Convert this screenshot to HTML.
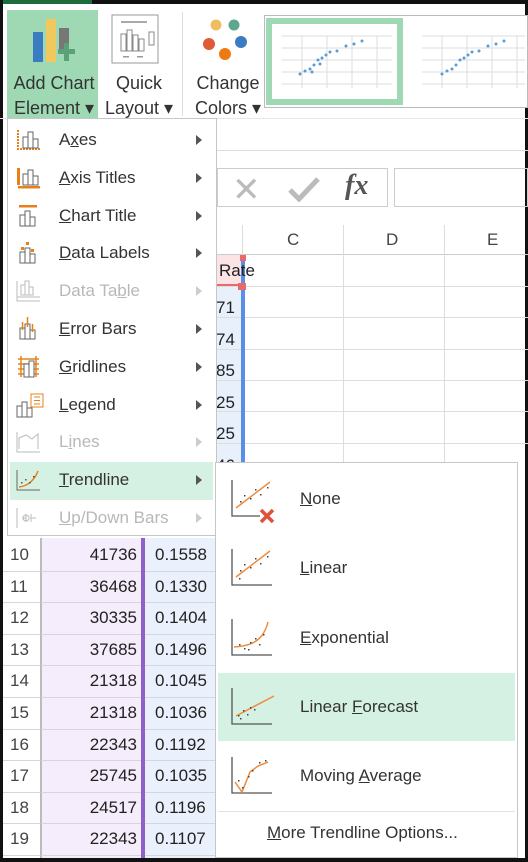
<!DOCTYPE html>
<html><head><meta charset="utf-8"><style>
*{margin:0;padding:0;box-sizing:border-box}
body{width:528px;height:862px;overflow:hidden;background:#fff;font-family:"Liberation Sans",sans-serif;position:relative;color:#222}
.a{position:absolute}
.mi{position:absolute;left:10px;width:203px;height:38px;font-size:17px;color:#333}
.mi .t{position:absolute;left:49px;top:9px}
.mi .ar{position:absolute;left:186px;top:14px;width:0;height:0;border-left:6px solid #555;border-top:5px solid transparent;border-bottom:5px solid transparent}
.dis{color:#b8b8b8}.dis .ar{border-left-color:#ccc}
.mi svg{position:absolute;left:5px;top:7px}
.si{position:absolute;left:218px;width:297px;height:68px;font-size:17px;color:#333}
.si .t{position:absolute;left:82px;top:24px}
.si svg{position:absolute;left:12px;top:14px}
.r{position:absolute;left:3px;width:213px;height:31.6px;border-bottom:1px solid #d6d6d6;font-size:17px;line-height:30px}
.r .n{position:absolute;left:7px;color:#444}
.r .b{position:absolute;left:40px;width:94px;text-align:right}
.r .c{position:absolute;left:152px}
.g{position:absolute;left:216px;width:312px;height:1px;background:#ddd}
u{text-decoration:underline}
</style></head><body>
<div class="a" style="left:0;top:0;width:528px;height:4px;background:#111"></div>
<div class="a" style="left:0;top:0;width:92px;height:4px;background:#1e6b3c"></div>
<div class="a" style="left:0;top:0;width:3px;height:862px;background:#111"></div>
<div class="a" style="left:525px;top:0;width:3px;height:862px;background:#111"></div>
<div class="a" style="left:0;top:858px;width:528px;height:4px;background:#111"></div>

<div class="a" style="left:7px;top:10px;width:91px;height:108px;background:#9fd9b4"></div>
<svg class="a" style="left:30px;top:17px" width="50" height="46" viewBox="0 0 50 46">
<rect x="3" y="15" width="10" height="30" fill="#3a7cc1"/><rect x="16" y="2" width="10" height="43" fill="#f0c85e"/><rect x="29" y="11" width="10" height="24" fill="#777"/>
<rect x="34" y="26" width="5" height="18" fill="#5ca07a"/><rect x="28" y="32" width="17" height="5" fill="#5ca07a"/></svg>
<div class="a" style="left:10px;top:71px;font-size:18px;color:#333;width:88px;text-align:center;line-height:25px">Add Chart<br>Element ▾</div>
<svg class="a" style="left:111px;top:14px" width="48" height="50"><rect x="1" y="1" width="46" height="48" fill="#fff" stroke="#999"/><rect x="10" y="7" width="26" height="2" fill="#aaa"/><rect x="10" y="20" width="5" height="17" fill="none" stroke="#888"/><rect x="16" y="16" width="5" height="21" fill="none" stroke="#888"/><rect x="22" y="21" width="5" height="16" fill="none" stroke="#888"/><rect x="28" y="25" width="5" height="12" fill="none" stroke="#888"/><rect x="38" y="18" width="5" height="13" fill="none" stroke="#888"/><rect x="12" y="42" width="6" height="1.5" fill="#999"/><rect x="26" y="42" width="6" height="1.5" fill="#999"/></svg>
<div class="a" style="left:104px;top:71px;font-size:18px;color:#333;width:70px;text-align:center;line-height:25px">Quick<br>Layout ▾</div>
<div class="a" style="left:182px;top:12px;width:1px;height:104px;background:#ddd"></div>
<svg class="a" style="left:200px;top:17px" width="50" height="46"><circle cx="16" cy="8" r="5.5" fill="#f1bd61"/><circle cx="34" cy="8" r="5.5" fill="#5ea68c"/><circle cx="9" cy="27" r="6" fill="#e05a35"/><circle cx="41" cy="25" r="6" fill="#3a7cc1"/><circle cx="25" cy="37" r="6" fill="#ee7b12"/></svg>
<div class="a" style="left:190px;top:71px;font-size:18px;color:#333;width:76px;text-align:center;line-height:25px">Change<br>Colors ▾</div>
<div class="a" style="left:264px;top:15px;width:264px;height:93px;border:1px solid #bbb;background:#fff"></div>
<div class="a" style="left:266px;top:18px;width:137px;height:87px;background:#9fd9b4"></div>
<svg class="a" style="left:272px;top:24px" width="125" height="75"><rect width="125" height="75" fill="#fff"/><g stroke="#ddd"><line x1="10" y1="12" x2="120" y2="12"/><line x1="10" y1="24" x2="120" y2="24"/><line x1="10" y1="36" x2="120" y2="36"/><line x1="10" y1="48" x2="120" y2="48"/><line x1="10" y1="60" x2="120" y2="60"/><line x1="30" y1="12" x2="30" y2="64"/><line x1="55" y1="12" x2="55" y2="64"/><line x1="80" y1="12" x2="80" y2="64"/><line x1="105" y1="12" x2="105" y2="64"/></g><g fill="#5b9bd5"><circle cx="28" cy="50" r="1.5"/><circle cx="33" cy="47" r="1.5"/><circle cx="38" cy="45" r="1.5"/><circle cx="42" cy="41" r="1.5"/><circle cx="46" cy="36" r="1.5"/><circle cx="50" cy="34" r="1.5"/><circle cx="54" cy="31" r="1.5"/><circle cx="58" cy="28" r="1.5"/><circle cx="65" cy="27" r="1.5"/><circle cx="74" cy="22" r="1.5"/><circle cx="82" cy="20" r="1.5"/><circle cx="90" cy="17" r="1.5"/><circle cx="40" cy="48" r="1.5"/><circle cx="48" cy="40" r="1.5"/></g></svg>
<svg class="a" style="left:412px;top:24px" width="113" height="75"><rect width="113" height="75" fill="#fff"/><g stroke="#ddd"><line x1="10" y1="12" x2="113" y2="12"/><line x1="10" y1="24" x2="113" y2="24"/><line x1="10" y1="36" x2="113" y2="36"/><line x1="10" y1="48" x2="113" y2="48"/><line x1="10" y1="60" x2="113" y2="60"/><line x1="30" y1="12" x2="30" y2="64"/><line x1="55" y1="12" x2="55" y2="64"/><line x1="80" y1="12" x2="80" y2="64"/><line x1="105" y1="12" x2="105" y2="64"/></g><g fill="#5b9bd5"><circle cx="30" cy="50" r="1.5"/><circle cx="35" cy="47" r="1.5"/><circle cx="40" cy="45" r="1.5"/><circle cx="44" cy="41" r="1.5"/><circle cx="48" cy="36" r="1.5"/><circle cx="52" cy="34" r="1.5"/><circle cx="56" cy="31" r="1.5"/><circle cx="60" cy="28" r="1.5"/><circle cx="67" cy="27" r="1.5"/><circle cx="76" cy="22" r="1.5"/><circle cx="84" cy="20" r="1.5"/><circle cx="92" cy="17" r="1.5"/></g></svg>
<div class="a" style="left:0;top:118px;width:528px;height:1px;background:#e6e6e6"></div>

<div class="a" style="left:216px;top:150px;width:312px;height:1px;background:#ddd"></div>
<div class="a" style="left:217px;top:168px;width:171px;height:39px;border:1px solid #ccc"></div>
<div class="a" style="left:394px;top:168px;width:134px;height:39px;border:1px solid #ccc"></div>
<div class="a" style="left:232px;top:170px;font-size:34px;color:#bbb">✕</div>
<svg class="a" style="left:288px;top:176px" width="32" height="26"><path d="M2 14 L11 23 L30 3" stroke="#bbb" stroke-width="5" fill="none"/></svg>
<div class="a" style="left:345px;top:170px;font-size:28px;color:#555;font-family:'Liberation Serif',serif;font-style:italic;font-weight:bold">fx</div>
<div class="a" style="left:216px;top:225px;width:312px;height:30px;border-bottom:1px solid #ccc"></div>
<div class="a" style="left:242px;top:225px;width:1px;height:30px;background:#ddd"></div>
<div class="a" style="left:343px;top:225px;width:1px;height:318px;background:#ddd"></div>
<div class="a" style="left:444px;top:225px;width:1px;height:318px;background:#ddd"></div>
<div class="a" style="left:287px;top:230px;font-size:17px;color:#444">C</div>
<div class="a" style="left:386px;top:230px;font-size:17px;color:#444">D</div>
<div class="a" style="left:487px;top:230px;font-size:17px;color:#444">E</div>
<div class="a" style="left:216px;top:255px;width:26px;height:31px;background:#fde4e4"></div>
<div class="a" style="left:216px;top:286px;width:26px;height:257px;background:#e8f0fc"></div>
<div class="g" style="top:286px"></div><div class="g" style="top:317px"></div><div class="g" style="top:349px"></div><div class="g" style="top:380px"></div><div class="g" style="top:411px"></div><div class="g" style="top:443px"></div>
<div class="a" style="left:241px;top:258px;width:4px;height:285px;background:#5b8ee6"></div>
<div class="a" style="left:240px;top:255px;width:6px;height:6px;background:#e86a6a"></div>
<div class="a" style="left:238px;top:283px;width:8px;height:7px;background:#e86a6a"></div>
<div class="a" style="left:216px;top:284px;width:26px;height:2px;background:#e86a6a"></div>
<div class="a" style="left:219px;top:261px;font-size:17px">Rate</div>
<div class="a" style="left:216px;top:292px;font-size:17px;line-height:31.5px">71<br>74<br>85<br>25<br>25<br>46</div>

<div class="a" style="left:3px;top:538px;width:38px;height:320px;background:#fff"></div>
<div class="a" style="left:41px;top:538px;width:100px;height:320px;background:#f5edfb;border-left:1px solid #bbb"></div>
<div class="a" style="left:141px;top:538px;width:4px;height:320px;background:#8e60c8"></div>
<div class="a" style="left:145px;top:538px;width:71px;height:320px;background:#eaf1fc"></div>
<div class="r" style="top:540px"><span class="n">10</span><span class="b">41736</span><span class="c">0.1558</span></div>
<div class="r" style="top:571.6px"><span class="n">11</span><span class="b">36468</span><span class="c">0.1330</span></div>
<div class="r" style="top:603.2px"><span class="n">12</span><span class="b">30335</span><span class="c">0.1404</span></div>
<div class="r" style="top:634.8px"><span class="n">13</span><span class="b">37685</span><span class="c">0.1496</span></div>
<div class="r" style="top:666.4px"><span class="n">14</span><span class="b">21318</span><span class="c">0.1045</span></div>
<div class="r" style="top:698px"><span class="n">15</span><span class="b">21318</span><span class="c">0.1036</span></div>
<div class="r" style="top:729.6px"><span class="n">16</span><span class="b">22343</span><span class="c">0.1192</span></div>
<div class="r" style="top:761.2px"><span class="n">17</span><span class="b">25745</span><span class="c">0.1035</span></div>
<div class="r" style="top:792.8px"><span class="n">18</span><span class="b">24517</span><span class="c">0.1196</span></div>
<div class="r" style="top:824.4px"><span class="n">19</span><span class="b">22343</span><span class="c">0.1107</span></div>
<div class="a" style="left:141px;top:538px;width:4px;height:320px;background:#8e60c8"></div>
<div class="a" style="left:40px;top:538px;width:1px;height:320px;background:#bbb"></div>

<div class="a" style="left:7px;top:118px;width:210px;height:418px;background:#fff;border:1px solid #c6c6c6"></div>
<div class="a" style="left:10px;top:462px;width:203px;height:38px;background:#d5f1e3"></div>
<div class="mi" style="top:121px"><svg width="28" height="24"><path d="M3 2V21H26" stroke="#e8801a" stroke-width="2" stroke-dasharray="2 1" fill="none"/><rect x="8" y="9" width="5" height="11" fill="none" stroke="#666"/><rect x="13" y="4" width="5" height="16" fill="none" stroke="#666"/><rect x="18" y="11" width="5" height="9" fill="none" stroke="#666"/></svg><span class="t">A<u>x</u>es</span><span class="ar"></span></div>
<div class="mi" style="top:159px"><svg width="28" height="24"><rect x="2" y="2" width="3" height="17" fill="#e8801a"/><rect x="3" y="20" width="22" height="2.5" fill="#e8801a"/><rect x="8" y="8" width="5" height="11" fill="none" stroke="#666"/><rect x="13" y="4" width="5" height="15" fill="none" stroke="#666"/><rect x="18" y="10" width="5" height="9" fill="none" stroke="#666"/></svg><span class="t"><u>A</u>xis Titles</span><span class="ar"></span></div>
<div class="mi" style="top:197px"><svg width="28" height="24"><rect x="4" y="1" width="18" height="2.5" fill="#e8801a"/><rect x="5" y="11" width="5" height="11" fill="none" stroke="#666"/><rect x="10" y="7" width="5" height="15" fill="none" stroke="#666"/><rect x="15" y="13" width="5" height="9" fill="none" stroke="#666"/></svg><span class="t"><u>C</u>hart Title</span><span class="ar"></span></div>
<div class="mi" style="top:234px"><svg width="28" height="24"><rect x="5" y="11" width="5" height="11" fill="none" stroke="#666"/><rect x="10" y="7" width="5" height="15" fill="none" stroke="#666"/><rect x="15" y="13" width="5" height="9" fill="none" stroke="#666"/><rect x="6" y="6" width="3" height="3" fill="#e8801a"/><rect x="11" y="1" width="3" height="3" fill="#e8801a"/><rect x="16" y="8" width="3" height="3" fill="#e8801a"/></svg><span class="t"><u>D</u>ata Labels</span><span class="ar"></span></div>
<div class="mi dis" style="top:272px"><svg width="28" height="24"><g stroke="#bbb" fill="none"><rect x="6" y="6" width="4" height="10"/><rect x="10" y="2" width="4" height="14"/><rect x="14" y="8" width="4" height="8"/><path d="M2 2V22H25M2 18H25"/></g></svg><span class="t">Data Ta<u>b</u>le</span><span class="ar"></span></div>
<div class="mi" style="top:310px"><svg width="28" height="24"><rect x="5" y="11" width="5" height="11" fill="none" stroke="#666"/><rect x="10" y="7" width="5" height="15" fill="none" stroke="#666"/><rect x="15" y="13" width="5" height="9" fill="none" stroke="#666"/><path d="M7.5 5V13M12.5 0V10M17.5 7V15" stroke="#e8801a" stroke-width="1.5"/></svg><span class="t"><u>E</u>rror Bars</span><span class="ar"></span></div>
<div class="mi" style="top:348px"><svg width="28" height="24"><path d="M3 4H24M3 9H24M3 14H24M3 19H24M6 1V22M21 1V22" stroke="#e8801a" stroke-width="1.5"/><rect x="9" y="9" width="5" height="13" fill="#fff" stroke="#666"/><rect x="14" y="6" width="5" height="16" fill="#fff" stroke="#666"/></svg><span class="t"><u>G</u>ridlines</span><span class="ar"></span></div>
<div class="mi" style="top:386px"><svg width="30" height="26"><rect x="2" y="13" width="5" height="11" fill="none" stroke="#666"/><rect x="7" y="9" width="5" height="15" fill="none" stroke="#666"/><rect x="12" y="15" width="5" height="9" fill="none" stroke="#666"/><rect x="16" y="1" width="12" height="13" fill="#fff" stroke="#e8801a"/><path d="M19 4H25M19 7.5H25M19 11H25" stroke="#e8801a"/></svg><span class="t"><u>L</u>egend</span><span class="ar"></span></div>
<div class="mi dis" style="top:423px"><svg width="28" height="24"><path d="M2 2V22H25M4 19V8L11 5L17 9L23 4V19" stroke="#bbb" fill="none"/></svg><span class="t">L<u>i</u>nes</span><span class="ar"></span></div>
<div class="mi" style="top:461px"><svg width="28" height="24"><path d="M2 2V22H25" stroke="#666" fill="none"/><path d="M4 19C13 18 19 13 23 3" stroke="#e8801a" stroke-width="1.5" fill="none"/><g fill="#555"><rect x="6" y="14" width="1.5" height="1.5"/><rect x="10" y="11" width="1.5" height="1.5"/><rect x="14" y="14" width="1.5" height="1.5"/><rect x="18" y="8" width="1.5" height="1.5"/></g></svg><span class="t"><u>T</u>rendline</span><span class="ar"></span></div>
<div class="mi dis" style="top:499px"><svg width="28" height="24"><path d="M2 2V22M7 12H11M16 12H21M11 8V16M16 8V16" stroke="#bbb" fill="none"/><circle cx="11" cy="12" r="3" stroke="#bbb" fill="none"/></svg><span class="t"><u>U</u>p/Down Bars</span><span class="ar"></span></div>

<div class="a" style="left:215px;top:462px;width:303px;height:396px;background:#fff;border:1px solid #c6c6c6"></div>
<div class="a" style="left:218px;top:673px;width:297px;height:68px;background:#d5f1e3"></div>
<div class="si" style="top:465px"><svg width="56" height="48"><path d="M2 1V37H30" stroke="#555" fill="none" stroke-width="1.3"/><path d="M6 29L40 3" stroke="#ee8c3e" stroke-width="1.5"/><g fill="#444"><rect x="10" y="22" width="1.5" height="1.5"/><rect x="14" y="16" width="1.5" height="1.5"/><rect x="20" y="19" width="1.5" height="1.5"/><rect x="25" y="10" width="1.5" height="1.5"/><rect x="30" y="15" width="1.5" height="1.5"/><rect x="37" y="8" width="1.5" height="1.5"/></g><path d="M31 31L43 43M43 31L31 43" stroke="#e0503a" stroke-width="3.5"/></svg><span class="t"><u>N</u>one</span></div>
<div class="si" style="top:534px"><svg width="56" height="48"><path d="M2 1V37H42" stroke="#555" fill="none" stroke-width="1.3"/><path d="M6 29L40 3" stroke="#ee8c3e" stroke-width="1.5"/><g fill="#444"><rect x="10" y="22" width="1.5" height="1.5"/><rect x="14" y="16" width="1.5" height="1.5"/><rect x="20" y="19" width="1.5" height="1.5"/><rect x="25" y="10" width="1.5" height="1.5"/><rect x="30" y="15" width="1.5" height="1.5"/><rect x="37" y="8" width="1.5" height="1.5"/><rect x="9" y="30" width="1.5" height="1.5"/></g></svg><span class="t"><u>L</u>inear</span></div>
<div class="si" style="top:604px"><svg width="56" height="48"><path d="M2 1V37H42" stroke="#555" fill="none" stroke-width="1.3"/><path d="M4 29C20 28 33 24 38 4" stroke="#ee8c3e" stroke-width="1.5" fill="none"/><g fill="#444"><rect x="9" y="26" width="1.5" height="1.5"/><rect x="14" y="30" width="1.5" height="1.5"/><rect x="20" y="24" width="1.5" height="1.5"/><rect x="25" y="20" width="1.5" height="1.5"/><rect x="29" y="26" width="1.5" height="1.5"/><rect x="33" y="16" width="1.5" height="1.5"/><rect x="18" y="31" width="1.5" height="1.5"/></g></svg><span class="t"><u>E</u>xponential</span></div>
<div class="si" style="top:673px"><svg width="56" height="48"><path d="M2 1V37H42" stroke="#555" fill="none" stroke-width="1.3"/><path d="M6 29L44 9" stroke="#ee8c3e" stroke-width="1.5"/><g fill="#444"><rect x="8" y="28" width="1.5" height="1.5"/><rect x="13" y="23" width="1.5" height="1.5"/><rect x="17" y="27" width="1.5" height="1.5"/><rect x="20" y="20" width="1.5" height="1.5"/><rect x="24" y="22" width="1.5" height="1.5"/><rect x="10" y="31" width="1.5" height="1.5"/></g></svg><span class="t">Linear <u>F</u>orecast</span></div>
<div class="si" style="top:742px"><svg width="56" height="48"><path d="M2 1V37H42" stroke="#555" fill="none" stroke-width="1.3"/><path d="M5 26L12 36L20 16L28 10L38 6" stroke="#ee8c3e" stroke-width="1.5" fill="none"/><g fill="#444"><rect x="8" y="24" width="1.5" height="1.5"/><rect x="12" y="31" width="1.5" height="1.5"/><rect x="18" y="20" width="1.5" height="1.5"/><rect x="22" y="14" width="1.5" height="1.5"/><rect x="29" y="6" width="1.5" height="1.5"/><rect x="35" y="4" width="1.5" height="1.5"/></g></svg><span class="t">Moving <u>A</u>verage</span></div>
<div class="a" style="left:218px;top:811px;width:297px;height:1px;background:#e2e2e2"></div>
<div class="a" style="left:267px;top:823px;font-size:17px;color:#333"><u>M</u>ore Trendline Options...</div>
</body></html>
